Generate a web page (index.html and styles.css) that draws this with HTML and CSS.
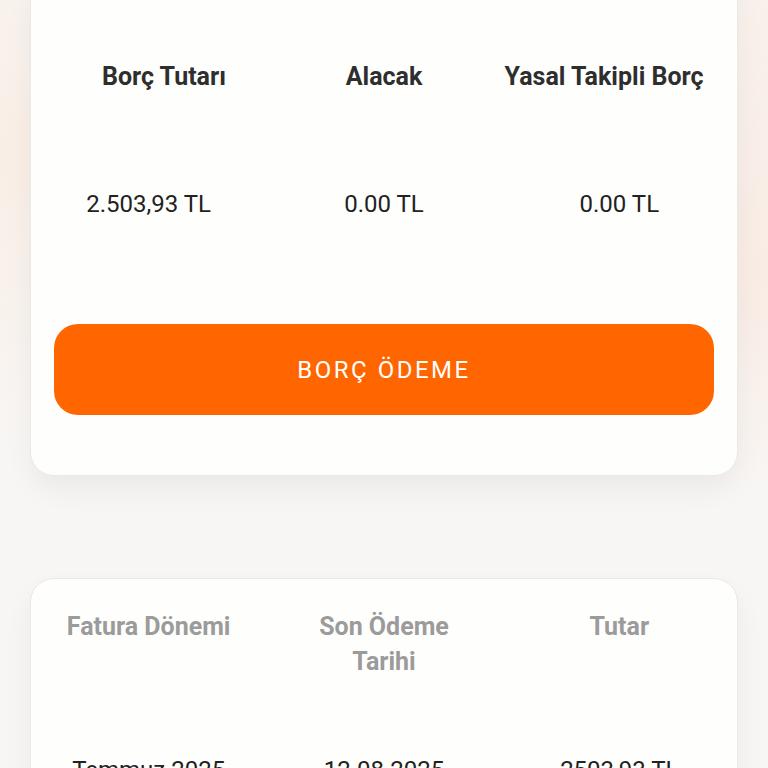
FILE: index.html
```html
<!DOCTYPE html>
<html lang="tr">
<head>
  <meta charset="UTF-8" />
  <meta name="viewport" content="width=device-width, initial-scale=1" />
  <title>Borç Bilgisi</title>
  <link rel="stylesheet" href="styles.css">
</head>
<body>
  <div class="page">

    <!-- Borç özeti -->
    <div class="card summary">
      <div class="row-3 heads">
        <div>Borç Tutarı</div>
        <div>Alacak</div>
        <div>Yasal Takipli Borç</div>
      </div>
      <div class="row-3 values">
        <div>2.503,93 TL</div>
        <div>0.00 TL</div>
        <div>0.00 TL</div>
      </div>
      <button class="pay">BORÇ ÖDEME</button>
    </div>

    <!-- Fatura listesi -->
    <div class="card bills">
      <div class="row-3 heads muted">
        <div>Fatura Dönemi</div>
        <div>Son Ödeme<br>Tarihi</div>
        <div>Tutar</div>
      </div>
      <div class="row-3 values">
        <div>Temmuz 2025</div>
        <div>12.08.2025</div>
        <div>2503,93 TL</div>
      </div>
    </div>

  </div>
</body>
</html>
```

FILE: styles.css
```css
body {
  margin: 0;
  font-family: Roboto, "Noto Sans", sans-serif;
  background-color: #f8f6f4;
  background-image:
    radial-gradient(circle at 0% 20%, rgba(250, 230, 215, 0.5), transparent 30%),
    radial-gradient(circle at 100% 35%, rgba(250, 225, 210, 0.5), transparent 25%),
    radial-gradient(circle at 100% 5%, rgba(250, 230, 215, 0.4), transparent 20%);
  height: 768px;
  overflow: hidden;
}
.page {
  padding: 0 30px;
}
.card {
  background-color: #fefefd;
  border: 1px solid #ebe8e6;
  border-radius: 24px;
  box-shadow: 0 14px 28px rgba(0, 0, 0, 0.05);
}
.summary {
  margin-top: -24px;
  padding: 82px 0 60px;
}
.bills {
  margin-top: 102px;
  padding-top: 30px;
}
.row-3 {
  display: grid;
  grid-template-columns: 1fr 1fr 1fr;
  text-align: center;
}
.heads {
  font-weight: bold;
  font-size: 25px;
  line-height: 36px;
  color: #2e2e2e;
}
.summary .heads {
  padding: 0 23px;
}
.values {
  font-size: 24px;
  line-height: 36px;
  color: #222;
}
.summary .values {
  margin-top: 91px;
}
.muted {
  color: #9b9b9b;
  line-height: 35px;
}
.bills .values {
  margin-top: 73px;
}
.pay {
  display: block;
  width: calc(100% - 46px);
  margin: 102px 23px 0;
  height: 91px;
  border: none;
  border-radius: 24px;
  background-color: #ff6600;
  color: #fff;
  font-family: Roboto, "Noto Sans", sans-serif;
  font-size: 24px;
  letter-spacing: 2.5px;
  cursor: pointer;
}
```
